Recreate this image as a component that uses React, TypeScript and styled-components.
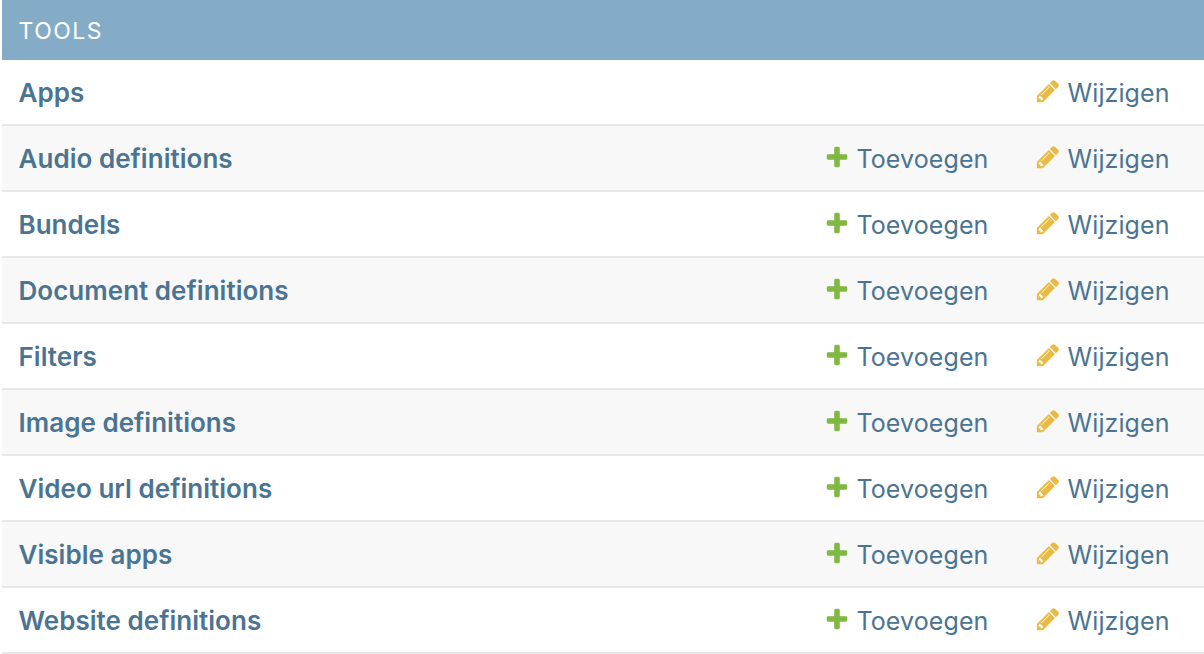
import styled, { createGlobalStyle } from 'styled-components'

const GlobalStyle = createGlobalStyle`
  html, body {
    margin: 0;
    padding: 0;
    background: #ffffff;
    font-family: Inter, "Liberation Sans", sans-serif;
  }
`

const Module = styled.section`
  padding-left: 2px;
  width: 1202px;
`

const Caption = styled.h2`
  box-sizing: border-box;
  margin: 0;
  height: 60px;
  display: flex;
  align-items: center;
  padding: 2px 0 0 16.5px;
  background: #85acc7;
  color: #ffffff;
  font-size: 23px;
  font-weight: 400;
  letter-spacing: 1.5px;
  text-transform: uppercase;
`

const Row = styled.div<{ $alt: boolean }>`
  box-sizing: border-box;
  height: 66px;
  display: grid;
  grid-template-columns: 1fr 211px 137px;
  align-items: center;
  padding: 0 32px 0 16.5px;
  background: ${(p) => (p.$alt ? '#f8f8f8' : '#ffffff')};
  border-bottom: 2px solid #e8e8e8;
`

const ModelName = styled.a`
  color: #4a7492;
  font-size: 26px;
  font-weight: 600;
  letter-spacing: 0.03px;
  text-decoration: none;
`

const Action = styled.a`
  display: inline-flex;
  align-items: center;
  gap: 6.5px;
  padding-top: 2px;
  color: #4a7492;
  font-size: 25px;
  font-weight: 400;
  letter-spacing: 0.1px;
  text-decoration: none;
`

const Icon = styled.svg`
  width: 26px;
  height: 26px;
  flex: none;
  margin-top: -4px;
`

const AddIcon = () => (
  <Icon viewBox="0 0 1792 1792">
    <path
      fill="#80b842"
      d="M1600 796v192q0 40-28 68t-68 28h-416v416q0 40-28 68t-68 28h-192q-40 0-68-28t-28-68v-416h-416q-40 0-68-28t-28-68v-192q0-40 28-68t68-28h416v-416q0-40 28-68t68-28h192q40 0 68 28t28 68v416h416q40 0 68 28t28 68z"
    />
  </Icon>
)

const ChangeIcon = () => (
  <Icon viewBox="0 0 1792 1792">
    <path
      fill="#e9bb44"
      d="M491 1536l91-91-235-235-91 91v107h128v128h107zm523-928q0-22-22-22-10 0-17 7l-542 542q-7 7-7 17 0 22 22 22 10 0 17-7l542-542q7-7 7-17zm-54-192l416 416-832 832h-416v-416zm683 96q0 53-37 90l-166 166-416-416 166-165q36-38 90-38 53 0 91 38l235 234q37 39 37 91z"
    />
  </Icon>
)

const models = [
  { name: 'Apps', canAdd: false },
  { name: 'Audio definitions', canAdd: true },
  { name: 'Bundels', canAdd: true },
  { name: 'Document definitions', canAdd: true },
  { name: 'Filters', canAdd: true },
  { name: 'Image definitions', canAdd: true },
  { name: 'Video url definitions', canAdd: true },
  { name: 'Visible apps', canAdd: true },
  { name: 'Website definitions', canAdd: true },
]

export default function App() {
  return (
    <>
      <GlobalStyle />
      <Module>
        <Caption>Tools</Caption>
        {models.map((model, i) => (
          <Row key={model.name} $alt={i % 2 === 1}>
            <ModelName href="#">{model.name}</ModelName>
            <div>
              {model.canAdd && (
                <Action href="#">
                  <AddIcon />
                  Toevoegen
                </Action>
              )}
            </div>
            <div>
              <Action href="#">
                <ChangeIcon />
                Wijzigen
              </Action>
            </div>
          </Row>
        ))}
      </Module>
    </>
  )
}
